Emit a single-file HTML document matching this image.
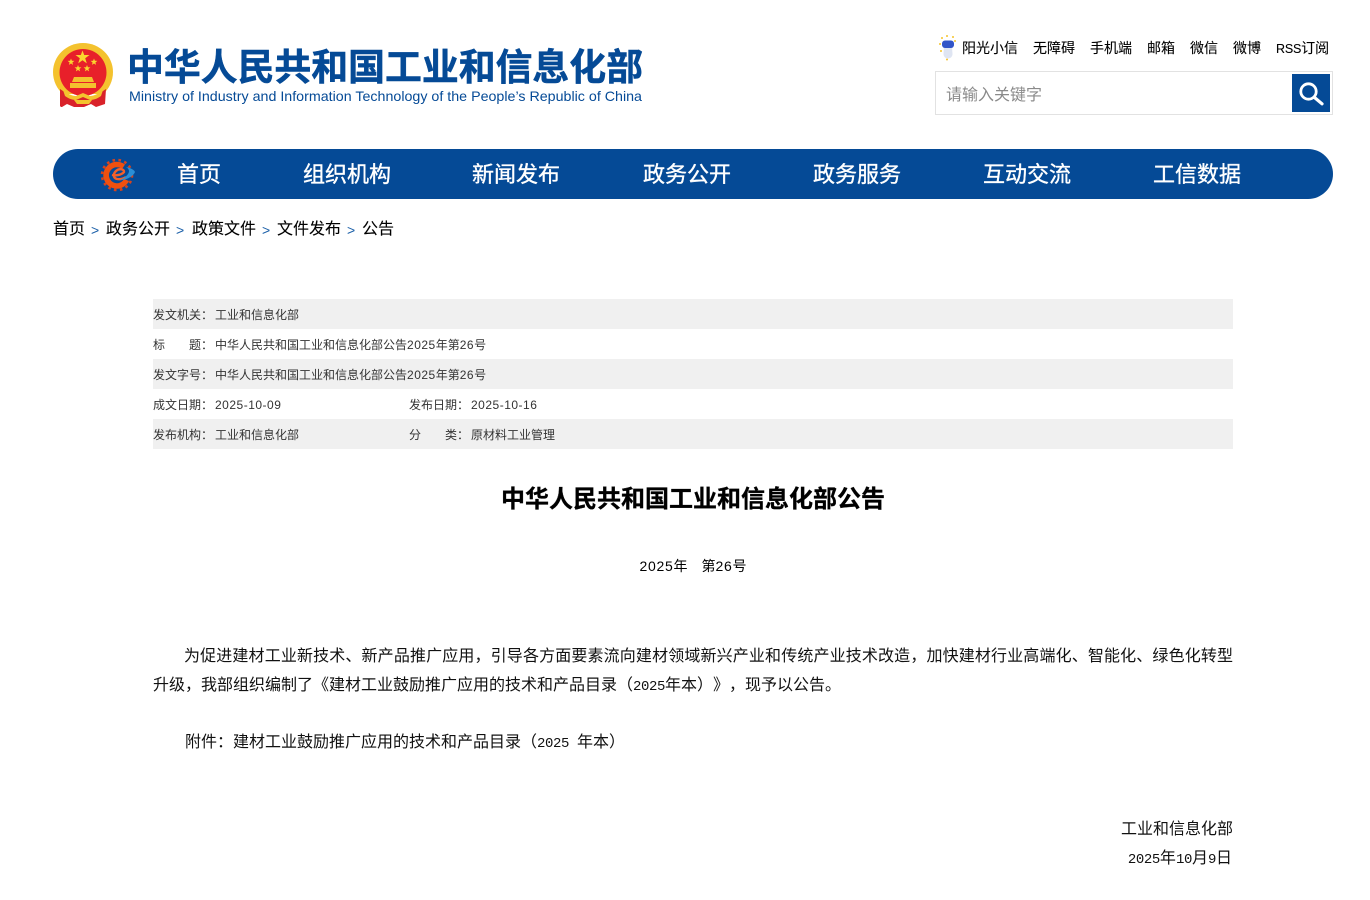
<!DOCTYPE html>
<html lang="zh-CN">
<head>
<meta charset="utf-8">
<title>中华人民共和国工业和信息化部公告</title>
<style>
html,body{margin:0;padding:0;background:#fff}
body{width:1370px;height:900px;position:relative;overflow:hidden;font-family:"Liberation Sans","Noto Sans CJK SC",sans-serif;color:#000}
.a{position:absolute;white-space:nowrap}
.top{top:38px;font-size:14px;line-height:20px;color:#000;-webkit-text-stroke:.1px #000}
.nav{top:159px;font-size:22px;line-height:32px;color:#fff;-webkit-text-stroke:.35px #fff}
.bc{top:219px;font-size:16px;line-height:22px;color:#000;-webkit-text-stroke:.1px #000}
.sep{top:219px;font-size:14px;line-height:22px;color:#1a5fa8}
.row{position:absolute;left:153px;width:1080px;height:30px;background:#f0f0f0}
.t{font-size:12px;line-height:18px;color:#333}
.t span{letter-spacing:.5px}
.b{font-family:"WenQuanYi Zen Hei","Noto Sans CJK SC",sans-serif;font-size:16px;line-height:24px;color:#111;text-spacing-trim:space-all;font-kerning:none}
.b i{font-family:"Liberation Mono",monospace;font-style:normal;font-size:14px;letter-spacing:-.4px}
</style>
</head>
<body>
<svg class="a" style="left:50px;top:40px" width="66" height="70" viewBox="50 40 66 70">
<path d="M83 43c16.500 0 30 13 30 29 0 9-4 17-10 22H63c-6-5-10-13-10-22 0-16 13.500-29 30-29z" fill="#f4c22e"/>
<circle cx="83" cy="72.500" r="23.500" fill="#e8202a"/>
<polygon points="82.500,50.500 84.200,55 89.500,55 85.200,58.200 86.800,63.400 82.500,60.200 78.200,63.400 79.800,58.200 75.500,55 80.800,55" fill="#fbd52e"/>
<polygon points="71,58.500 71.900,60.800 74.400,60.900 72.400,62.500 73.100,64.900 71,63.500 68.900,64.900 69.600,62.500 67.600,60.900 70.100,60.800" fill="#fbd52e"/>
<polygon points="94,58.500 94.900,60.800 97.400,60.900 95.400,62.500 96.100,64.900 94,63.500 91.900,64.900 92.600,62.500 90.600,60.900 93.100,60.800" fill="#fbd52e"/>
<polygon points="78,65 78.900,67.300 81.400,67.400 79.400,69 80.100,71.400 78,70 75.900,71.400 76.600,69 74.600,67.400 77.100,67.300" fill="#fbd52e"/>
<polygon points="87,65 87.900,67.300 90.400,67.400 88.400,69 89.100,71.400 87,70 84.900,71.400 85.600,69 83.600,67.400 86.100,67.300" fill="#fbd52e"/>
<path d="M74 77h18l2 5h-22z" fill="#f4c22e"/>
<rect x="70" y="83" width="26" height="5" fill="#f4c22e"/>
<path d="M60 89l9 6 6 2h16l6-2 9-6-1 15-9 3-5-3-7 3h-10l-7-3-5 3-1 0-1-1z" fill="#d9222a"/>
<path d="M63 90c5 4 9 6 13 6l7-3 7 3c4 0 8-2 13-6l-2 6c-4 3-8 4-11 4l-7-3-7 3c-3 0-7-1-11-4z" fill="#f4c22e"/>
<path d="M74 100h18l-3 4h-12z" fill="#f4c22e"/>
</svg>
<svg class="a" style="left:120px;top:40px" width="530" height="70">
<text x="7" y="40" font-family="Noto Sans CJK SC" font-weight="700" font-size="37" fill="#054a96" stroke="#054a96" stroke-width=".5" textLength="516" lengthAdjust="spacingAndGlyphs">中华人民共和国工业和信息化部</text>
<text x="9" y="61" font-family="Liberation Sans" font-size="14" fill="#054a96" textLength="513" lengthAdjust="spacingAndGlyphs">Ministry of Industry and Information Technology of the People’s Republic of China</text>
</svg>

<svg class="a" style="left:935px;top:33px" width="26" height="30" viewBox="0 0 26 30">
<g fill="#f5c32c"><circle cx="7" cy="5" r="1"/><circle cx="12" cy="3" r="1"/><circle cx="18" cy="4" r="1"/><circle cx="5" cy="11" r="1"/><circle cx="20" cy="8" r="1"/><circle cx="6" cy="18" r="1"/><circle cx="12" cy="26.500" r="1"/></g>
<path d="M9 14h8l.500 7c0 2.500-2 4.500-4.500 4.500S8.500 23.500 8.500 21z" fill="#dfe5f2"/>
<rect x="7" y="7.500" width="12" height="7.500" rx="3" fill="#3255c8"/>
</svg>
<div class="a top" style="left:962px">阳光小信</div>
<div class="a top" style="left:1033px">无障碍</div>
<div class="a top" style="left:1090px">手机端</div>
<div class="a top" style="left:1147px">邮箱</div>
<div class="a top" style="left:1190px">微信</div>
<div class="a top" style="left:1233px">微博</div>
<div class="a top" style="left:1276px"><span style="font-size:12.500px;letter-spacing:-.2px">RSS</span>订阅</div>

<div class="a" style="left:935px;top:71px;width:396px;height:42px;border:1px solid #e2e2e2"></div>
<div class="a" style="left:946px;top:85px;font-size:16px;line-height:22px;color:#8a8a8a">请输入关键字</div>
<div class="a" style="left:1292px;top:74px;width:38px;height:38px;background:#054a96"></div>
<svg class="a" style="left:1292px;top:74px" width="38" height="38" viewBox="0 0 38 38" fill="none" stroke="#fff"><circle cx="16.500" cy="17.500" r="7.700" stroke-width="2.800"/><path d="M22.500 23.500L30 29.800" stroke-width="3.200" stroke-linecap="round"/></svg>

<div class="a" style="left:53px;top:149px;width:1280px;height:50px;border-radius:25px;background:#054a96"></div>
<svg class="a" style="left:98px;top:155px" width="40" height="40" viewBox="0 0 40 40">
<circle cx="19" cy="20" r="15" fill="none" stroke="#d8431c" stroke-width="2.600" stroke-dasharray="2.600 3.400"/>
<path d="M31 26A13.500 13.500 0 1 1 27 9.500L24 14A8 8 0 1 0 26 24z" fill="#f0500f"/>
<path d="M14 20c5 1 10-.500 12-3 .500-3-5-4-8-1-3 3-3 7 1 8 3 .500 6 0 9-2" fill="none" stroke="#f5602a" stroke-width="2.400"/>
<path d="M22 25c6 0 13-3 15-8-.500-2-4-4-9-5 3 2 4 4 2 7-2 3-5 4.500-8 6z" fill="#2a8fd6"/>
</svg>
<div class="a nav" style="left:177px">首页</div>
<div class="a nav" style="left:303px">组织机构</div>
<div class="a nav" style="left:472px">新闻发布</div>
<div class="a nav" style="left:643px">政务公开</div>
<div class="a nav" style="left:813px">政务服务</div>
<div class="a nav" style="left:983px">互动交流</div>
<div class="a nav" style="left:1153px">工信数据</div>

<div class="a bc" style="left:53px">首页</div>
<div class="a sep" style="left:91px">&gt;</div>
<div class="a bc" style="left:106px">政务公开</div>
<div class="a sep" style="left:176px">&gt;</div>
<div class="a bc" style="left:192px">政策文件</div>
<div class="a sep" style="left:262px">&gt;</div>
<div class="a bc" style="left:277px">文件发布</div>
<div class="a sep" style="left:347px">&gt;</div>
<div class="a bc" style="left:362px">公告</div>

<div class="row" style="top:299px"></div>
<div class="row" style="top:359px"></div>
<div class="row" style="top:419px"></div>
<div class="a t" style="left:153px;top:306px">发文机关：</div>
<div class="a t" style="left:215px;top:306px">工业和信息化部</div>
<div class="a t" style="left:153px;top:336px">标</div>
<div class="a t" style="left:189px;top:336px">题：</div>
<div class="a t" style="left:215px;top:336px">中华人民共和国工业和信息化部公告<span>2025</span>年第<span>26</span>号</div>
<div class="a t" style="left:153px;top:366px">发文字号：</div>
<div class="a t" style="left:215px;top:366px">中华人民共和国工业和信息化部公告<span>2025</span>年第<span>26</span>号</div>
<div class="a t" style="left:153px;top:396px">成文日期：</div>
<div class="a t" style="left:215px;top:396px"><span>2025-10-09</span></div>
<div class="a t" style="left:409px;top:396px">发布日期：</div>
<div class="a t" style="left:471px;top:396px"><span>2025-10-16</span></div>
<div class="a t" style="left:153px;top:426px">发布机构：</div>
<div class="a t" style="left:215px;top:426px">工业和信息化部</div>
<div class="a t" style="left:409px;top:426px">分</div>
<div class="a t" style="left:445px;top:426px">类：</div>
<div class="a t" style="left:471px;top:426px">原材料工业管理</div>

<div class="a" style="left:153px;width:1080px;top:483px;text-align:center;font-size:24px;line-height:34px;font-weight:700;color:#000;-webkit-text-stroke:.3px #000">中华人民共和国工业和信息化部公告</div>
<div class="a" style="left:153px;width:1080px;top:555px;text-align:center;font-size:14px;line-height:22px;color:#000"><span style="letter-spacing:.7px">2025</span>年　第<span style="letter-spacing:.7px">26</span>号</div>

<div class="a b" style="left:184px;width:1049px;top:642px;white-space:normal;text-align:justify;text-align-last:justify">为促进建材工业新技术、新产品推广应用，引导各方面要素流向建材领域新兴产业和传统产业技术改造，加快建材行业高端化、智能化、绿色化转型</div>
<div class="a b" style="left:153px;top:671px">升级，我部组织编制了《建材工业鼓励推广应用的技术和产品目录（<i>2025</i>年本）》，现予以公告。</div>
<div class="a b" style="left:185px;top:728px">附件：建材工业鼓励推广应用的技术和产品目录（<i>2025 </i>年本）</div>
<div class="a b" style="right:137px;top:815px">工业和信息化部</div>
<div class="a b" style="right:138px;top:844px"><i>2025</i>年<i>10</i>月<i>9</i>日</div>
</body>
</html>
